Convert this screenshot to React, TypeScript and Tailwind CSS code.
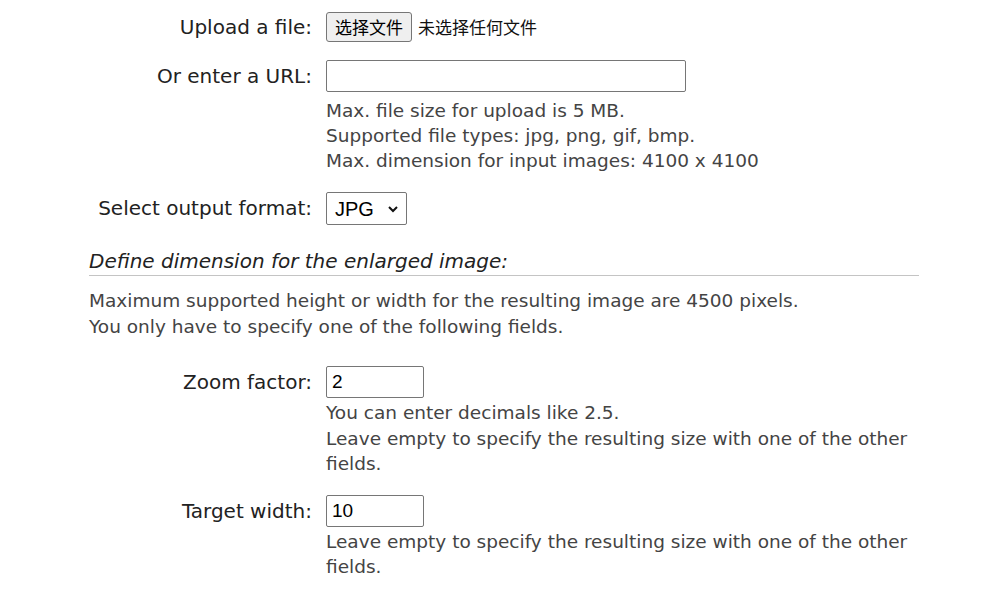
export default function App() {
  const font = { fontFamily: '"DejaVu Sans", Verdana, sans-serif' };
  return (
    <div className="min-h-screen bg-white text-[#222]" style={font}>
      <div className="ml-[89px] w-[830px] pt-[12px]">
        {/* Upload */}
        <div className="grid grid-cols-[223px_1fr] gap-x-[14px] items-center">
          <label className="text-right text-[20px] leading-[30px]">Upload a file:</label>
          <div className="flex items-center gap-[6px]">
            <button
              className="h-[30px] w-[86px] rounded-[3px] border border-[#767676] bg-[#efefef] text-[17px] text-black"
              style={{ fontFamily: '"Noto Sans CJK SC", sans-serif' }}
            >
              选择文件
            </button>
            <span
              className="text-[17px] text-[#111]"
              style={{ fontFamily: '"Noto Sans CJK SC", sans-serif' }}
            >
              未选择任何文件
            </span>
          </div>
        </div>

        {/* URL */}
        <div className="mt-[18px] grid grid-cols-[223px_1fr] gap-x-[14px]">
          <label className="text-right text-[20px] leading-[32px]">Or enter a URL:</label>
          <div>
            <input
              type="text"
              className="block h-[32px] w-[360px] rounded-[2px] border border-[#767676] bg-white px-[6px] outline-none"
            />
            <div className="mt-[6px] text-[18.5px] leading-[25px] text-[#444]">
              <div>Max. file size for upload is 5 MB.</div>
              <div>Supported file types: jpg, png, gif, bmp.</div>
              <div>Max. dimension for input images: 4100 x 4100</div>
            </div>
          </div>
        </div>

        {/* Output format */}
        <div className="mt-[19px] grid grid-cols-[223px_1fr] gap-x-[14px] items-center">
          <label className="text-right text-[20px] leading-[33px]">Select output format:</label>
          <div>
            <div className="flex h-[33px] w-[81px] items-center justify-between rounded-[2px] border border-[#767676] bg-white pl-[8px] pr-[7px]">
              <span className="text-[20px] text-black" style={{ fontFamily: '"Liberation Sans", Arial, sans-serif' }}>
                JPG
              </span>
              <svg width="12" height="8" viewBox="0 0 12 8" className="mt-[1px]">
                <path d="M2 2 L6 6 L10 2" fill="none" stroke="#111" strokeWidth="2" />
              </svg>
            </div>
          </div>
        </div>

        {/* Dimension heading */}
        <div className="mt-[23px] border-b border-[#c4c4c4] text-[20px] italic leading-[27px] text-[#222]">
          Define dimension for the enlarged image:
        </div>
        <div className="mt-[12px] text-[18.5px] leading-[25.5px] text-[#444]">
          <div>Maximum supported height or width for the resulting image are 4500 pixels.</div>
          <div>You only have to specify one of the following fields.</div>
        </div>

        {/* Zoom factor */}
        <div className="mt-[27px] grid grid-cols-[223px_1fr] gap-x-[14px]">
          <label className="text-right text-[20px] leading-[32px]">Zoom factor:</label>
          <div>
            <input
              type="text"
              defaultValue="2"
              className="block h-[32px] w-[98px] rounded-[2px] border border-[#767676] bg-white px-[5px] text-[19px] text-black outline-none"
              style={{ fontFamily: '"Liberation Sans", Arial, sans-serif' }}
            />
            <div className="mt-[2px] text-[18.5px] leading-[25.5px] text-[#444]">
              <div>You can enter decimals like 2.5.</div>
              <div>Leave empty to specify the resulting size with one of the other fields.</div>
            </div>
          </div>
        </div>

        {/* Target width */}
        <div className="mt-[18px] grid grid-cols-[223px_1fr] gap-x-[14px]">
          <label className="text-right text-[20px] leading-[32px]">Target width:</label>
          <div>
            <input
              type="text"
              defaultValue="10"
              className="block h-[32px] w-[98px] rounded-[2px] border border-[#767676] bg-white px-[5px] text-[19px] text-black outline-none"
              style={{ fontFamily: '"Liberation Sans", Arial, sans-serif' }}
            />
            <div className="mt-[2px] text-[18.5px] leading-[25.5px] text-[#444]">
              <div>Leave empty to specify the resulting size with one of the other fields.</div>
            </div>
          </div>
        </div>
      </div>
    </div>
  );
}
